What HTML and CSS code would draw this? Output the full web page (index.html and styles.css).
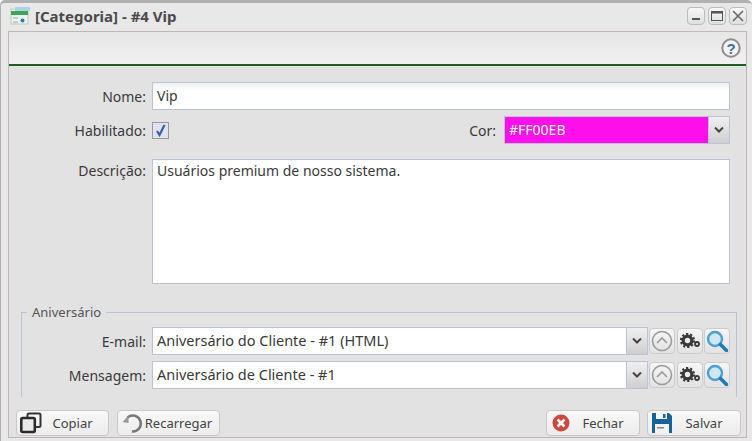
FILE: index.html
```html
<!DOCTYPE html>
<html lang="en">
<head>
    <meta charset="UTF-8">
    <title>[Categoria] - #4 Vip</title>
    <link rel="stylesheet" href="styles.css">
</head>
<body>
    <div class="window">
        <!-- Title bar -->
        <div class="titlebar">
            <svg class="title-icon" width="20" height="20" viewBox="0 0 20 20">
                <rect x="1" y="3" width="17" height="15" fill="#eef3ee" stroke="#b9c9bd"/>
                <rect x="1" y="5" width="17" height="4" fill="#3fa45b"/>
                <rect x="5" y="1" width="15" height="4" fill="#a9d6e4"/>
                <rect x="3" y="11" width="5" height="2" fill="#c5cfc8"/>
                <rect x="3" y="15" width="5" height="2" fill="#c5cfc8"/>
                <circle cx="12.500" cy="14.500" r="2" fill="#2a78b8"/>
            </svg>
            <span class="title-text">[Categoria] - #4 Vip</span>
            <div class="win-buttons">
                <span class="win-btn"><svg width="16" height="16" viewBox="0 0 16 16"><rect x="4" y="10" width="8" height="2" fill="#555"/></svg></span>
                <span class="win-btn"><svg width="16" height="16" viewBox="0 0 16 16"><rect x="2.500" y="3.500" width="11" height="9" fill="none" stroke="#555"/><rect x="2" y="3" width="12" height="2.500" fill="#555"/></svg></span>
                <span class="win-btn"><svg width="16" height="16" viewBox="0 0 16 16"><path d="M3 3l10 10M13 3L3 13" stroke="#666" stroke-width="1.600"/></svg></span>
            </div>
        </div>

        <div class="panel">
            <div class="toolbar">
                <svg width="20" height="20" viewBox="0 0 20 20">
                    <circle cx="10" cy="10" r="8.700" fill="#f2f2f2" stroke="#8c8c8c" stroke-width="2"/>
                    <text x="10" y="15.500" class="help-mark">?</text>
                </svg>
            </div>

            <div class="form">
                <div class="row row-name">
                    <label class="lbl">Nome:</label>
                    <div class="field input">Vip</div>
                </div>
                <div class="row row-flag">
                    <label class="lbl">Habilitado:</label>
                    <span class="check"><svg width="13" height="13" viewBox="0 0 13 13"><path d="M3 7l2.500 4L10.500 1" fill="none" stroke="#3f5ca8" stroke-width="2.200"/></svg></span>
                    <label class="lbl-color">Cor:</label>
                    <div class="combo color-combo">
                        <div class="field color-value">#FF00EB</div>
                        <span class="arrow"><svg width="10" height="6" viewBox="0 0 10 6"><path d="M1 0.500l4 4 4-4" fill="none" stroke="#444" stroke-width="2"/></svg></span>
                    </div>
                </div>
                <div class="row row-desc">
                    <label class="lbl">Descrição:</label>
                    <div class="field textarea">Usuários premium de nosso sistema.</div>
                </div>

                <div class="group">
                    <div class="legend">Aniversário</div>
                    <div class="row row-pick">
                        <label class="lbl lbl-group">E-mail:</label>
                        <div class="combo pick-combo">
                            <div class="field pick-value">Aniversário do Cliente - #1 (HTML)</div>
                            <span class="arrow"><svg width="10" height="6" viewBox="0 0 10 6"><path d="M1 0.500l4 4 4-4" fill="none" stroke="#444" stroke-width="2"/></svg></span>
                        </div>
                        <span class="tool"><svg width="22" height="22" viewBox="0 0 22 22"><circle cx="11" cy="11" r="9.500" fill="none" stroke="#9a9a9a" stroke-width="1.600"/><path d="M6 13l5-5 5 5" fill="none" stroke="#9a9a9a" stroke-width="1.600"/></svg></span>
                        <span class="tool"><svg width="22" height="22" viewBox="0 0 22 22"><circle cx="8.500" cy="10.500" r="4.300" fill="none" stroke="#3a3a3a" stroke-width="3.200"/><circle cx="8.500" cy="10.500" r="6.600" fill="none" stroke="#3a3a3a" stroke-width="2" stroke-dasharray="2.200 2"/><circle cx="18" cy="14" r="2" fill="none" stroke="#3a3a3a" stroke-width="1.800"/></svg></span>
                        <span class="tool"><svg width="22" height="22" viewBox="0 0 22 22"><circle cx="9" cy="9" r="7" fill="#cfe6f5" stroke="#4aa0d5" stroke-width="2.400"/><path d="M14.500 14.500l6 6" stroke="#1f7ab5" stroke-width="3.600" stroke-linecap="round"/></svg></span>
                    </div>
                    <div class="row row-pick">
                        <label class="lbl lbl-group">Mensagem:</label>
                        <div class="combo pick-combo">
                            <div class="field pick-value">Aniversário de Cliente - #1</div>
                            <span class="arrow"><svg width="10" height="6" viewBox="0 0 10 6"><path d="M1 0.500l4 4 4-4" fill="none" stroke="#444" stroke-width="2"/></svg></span>
                        </div>
                        <span class="tool"><svg width="22" height="22" viewBox="0 0 22 22"><circle cx="11" cy="11" r="9.500" fill="none" stroke="#9a9a9a" stroke-width="1.600"/><path d="M6 13l5-5 5 5" fill="none" stroke="#9a9a9a" stroke-width="1.600"/></svg></span>
                        <span class="tool"><svg width="22" height="22" viewBox="0 0 22 22"><circle cx="8.500" cy="10.500" r="4.300" fill="none" stroke="#3a3a3a" stroke-width="3.200"/><circle cx="8.500" cy="10.500" r="6.600" fill="none" stroke="#3a3a3a" stroke-width="2" stroke-dasharray="2.200 2"/><circle cx="18" cy="14" r="2" fill="none" stroke="#3a3a3a" stroke-width="1.800"/></svg></span>
                        <span class="tool"><svg width="22" height="22" viewBox="0 0 22 22"><circle cx="9" cy="9" r="7" fill="#cfe6f5" stroke="#4aa0d5" stroke-width="2.400"/><path d="M14.500 14.500l6 6" stroke="#1f7ab5" stroke-width="3.600" stroke-linecap="round"/></svg></span>
                    </div>
                </div>
            </div>

            <!-- Bottom buttons -->
            <div class="footer">
                <button class="btn btn-copy" type="button">
                    <svg width="22" height="22" viewBox="0 0 22 22"><rect x="7.500" y="1.500" width="13" height="13.500" rx="1.500" fill="none" stroke="#333" stroke-width="2"/><rect x="1.300" y="6" width="13.500" height="14" rx="1.500" fill="#e9e9e9" stroke="#2b2b2b" stroke-width="2.600"/></svg>
                    <span class="btn-label">Copiar</span>
                </button>
                <button class="btn btn-reload" type="button">
                    <svg width="22" height="22" viewBox="0 0 22 22"><path d="M6.500 5.500A8 8 0 1 1 11 19.500" fill="none" stroke="#777" stroke-width="2.600"/><path d="M1.500 10l6-6.500V11z" fill="#999"/></svg>
                    <span class="btn-label">Recarregar</span>
                </button>
                <span class="spacer"></span>
                <button class="btn btn-close" type="button">
                    <svg width="22" height="22" viewBox="0 0 22 22"><circle cx="11" cy="11" r="8.500" fill="#d2453f"/><path d="M7.500 7.500l7 7M14.500 7.500l-7 7" stroke="#fff" stroke-width="2.600"/></svg>
                    <span class="btn-label">Fechar</span>
                </button>
                <button class="btn btn-save" type="button">
                    <svg width="22" height="22" viewBox="0 0 22 22"><path d="M1 1h17l3 3v17H1z" fill="#15639d"/><rect x="5" y="1" width="11" height="6" fill="#fff"/><rect x="12" y="2" width="2.500" height="4" fill="#15639d"/><rect x="4" y="12" width="14" height="9" fill="#f2f2f2"/><rect x="6" y="15" width="7" height="1.500" fill="#888"/></svg>
                    <span class="btn-label">Salvar</span>
                </button>
            </div>
        </div>
    </div>
</body>
</html>
```

FILE: styles.css
```css
/* General Styles */
* {
    margin: 0;
    padding: 0;
    box-sizing: border-box;
}
body {
    font-family: "Noto Sans", Tahoma, sans-serif;
    font-size: 14px;
    color: #3a3a3a;
    background: #fff;
    overflow: hidden;
}
.window {
    width: 752px;
    height: 441px;
    padding: 0 5px 3px 2px;
    background: #e8e8e8;
    border-top: 3px solid #b0b0b0;
    border-left: 1px solid #b0b0b0;
    border-radius: 5px 5px 0 0;
    display: flex;
    flex-direction: column;
}

/* Title bar */
.titlebar {
    height: 28px;
    flex-shrink: 0;
    display: flex;
    align-items: center;
    padding: 0 0 2px 7px;
}
.title-icon {
    margin-right: 5px;
}
.title-text {
    font-weight: bold;
    font-size: 15px;
    color: #4a4a4a;
}
.win-buttons {
    margin-left: auto;
    display: flex;
    gap: 3px;
}
.win-btn {
    width: 18px;
    height: 18px;
    border: 1px solid #bbb;
    border-radius: 4px;
    background: linear-gradient(#f8f8f8, #dedede);
    display: flex;
    align-items: center;
    justify-content: center;
}

/* Main panel */
.panel {
    flex: 1;
    margin-left: 5px;
    border: 1px solid #bfb6b6;
    background: #e2e2e2;
    display: flex;
    flex-direction: column;
    min-height: 0;
}
.toolbar {
    height: 34px;
    flex-shrink: 0;
    display: flex;
    align-items: center;
    justify-content: flex-end;
    padding-right: 5px;
    background: linear-gradient(#e6e6e6, #f0f0f0);
    border-bottom: 2px solid #1f5f1f;
}
.help-mark {
    font-family: "Liberation Sans", sans-serif;
    font-size: 15px;
    font-weight: bold;
    fill: #3a6ea5;
    text-anchor: middle;
}

/* Form */
.form {
    flex: 1;
    min-height: 0;
    overflow: hidden;
    padding: 16px 16px 0 0;
}
.row {
    display: flex;
    align-items: center;
}
.lbl {
    width: 143px;
    padding-right: 6px;
    text-align: right;
    flex-shrink: 0;
}
.field {
    background: #fff;
    border: 1px solid #bcc2d8;
    padding: 0 4px;
}
.input {
    flex: 1;
    height: 28px;
    line-height: 26px;
    background: linear-gradient(#eef2f2, #fff 8px);
}
.row-flag {
    margin-top: 6px;
    height: 28px;
}
.check {
    width: 17px;
    height: 17px;
    border: 1px solid #999;
    background: #dfe3f0;
    display: flex;
    align-items: center;
    justify-content: center;
}
.lbl-color {
    margin-left: auto;
    margin-right: 8px;
}
.combo {
    display: flex;
    height: 28px;
}
.color-combo {
    width: 226px;
}
.color-value {
    flex: 1;
    background: #ff0feb;
    color: #fff;
    line-height: 26px;
    padding-left: 4px;
}
.arrow {
    width: 21px;
    flex-shrink: 0;
    display: flex;
    align-items: center;
    justify-content: center;
    background: linear-gradient(#f0f0f0, #cfcfcf);
    border: 1px solid #bcc2d8;
    border-left: 0;
}
.row-desc {
    margin-top: 15px;
    align-items: flex-start;
}
.row-desc .lbl {
    padding-top: 2px;
}
.textarea {
    flex: 1;
    height: 125px;
    padding-top: 1px;
}

/* Aniversário group */
.group {
    margin: 28px -7px 0 12px;
    height: 85px;
    border: 1px solid #bcc2d8;
    border-bottom: 0;
    position: relative;
}
.legend {
    position: absolute;
    top: -10px;
    left: 5px;
    padding: 0 5px;
    background: #e2e2e2;
    color: #555;
    font-size: 13px;
}
.row-pick {
    margin-top: 6px;
}
.legend + .row-pick {
    margin-top: 14px;
}
.lbl-group {
    width: 130px;
}
.pick-combo {
    width: 496px;
}
.pick-value {
    flex: 1;
    line-height: 25px;
    font-size: 14.500px;
}
.tool {
    width: 26px;
    height: 26px;
    margin-left: 1px;
    border: 1px solid #ccc;
    border-radius: 4px;
    background: linear-gradient(#f6f6f6, #e2e2e2);
    display: flex;
    align-items: center;
    justify-content: center;
}
.tool + .tool {
    margin-left: 1.500px;
}
.tool svg {
    flex-shrink: 0;
}

/* Bottom buttons */
.footer {
    height: 38px;
    flex-shrink: 0;
    display: flex;
    gap: 7px;
    padding: 11px 5px 0 7px;
}
.spacer {
    flex: 1;
}
.btn {
    height: 26px;
    border: 1px solid #c8c8c8;
    border-radius: 4px;
    background: linear-gradient(#f8f8f8, #ececec);
    font: inherit;
    font-size: 13px;
    color: #444;
    display: flex;
    align-items: center;
    padding: 0 5px 0 3px;
}
.btn svg {
    flex-shrink: 0;
}
.btn-label {
    flex: 1;
    text-align: center;
}
.btn-copy {
    width: 93px;
}
.btn-reload {
    width: 103px;
    margin-left: 1px;
}
.btn-close {
    width: 94px;
}
.btn-save {
    width: 94px;
}
```
